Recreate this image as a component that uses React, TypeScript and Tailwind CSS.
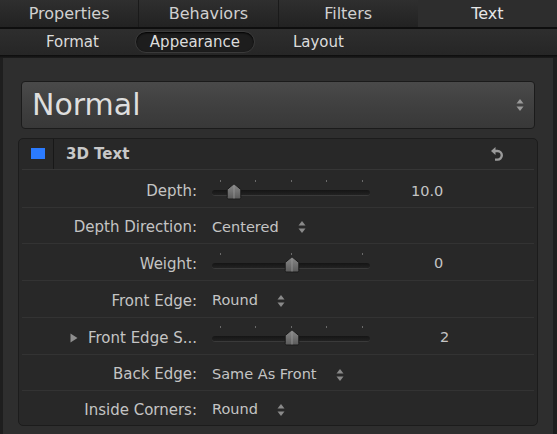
import React from 'react';

const font = { fontFamily: '"DejaVu Sans", "Liberation Sans", sans-serif' };

const UpDown: React.FC<{ className?: string }> = ({ className }) => (
    <svg width="8" height="14" viewBox="0 0 8 14" className={className}>
        <path d="M4 1 L7.5 5.5 L0.5 5.5 Z" fill="currentColor" />
        <path d="M4 13 L7.5 8.5 L0.5 8.5 Z" fill="currentColor" />
    </svg>
);

const Slider: React.FC<{ pos: number; ticks: number[] }> = ({ pos, ticks }) => (
    <div className="relative w-[158px] h-[36px] -mt-[3px]">
        {ticks.map((t) => (
            <div key={t} className="absolute top-[8px] w-px h-[2px] bg-[#6a6a6a]" style={{ left: t }} />
        ))}
        <div className="absolute left-0 right-0 top-[18px] h-[6px] rounded-full bg-gradient-to-b from-[#151515] to-[#222] border-b border-[#3a3a3a]" />
        <svg width="16" height="17" viewBox="0 0 16 17" className="absolute top-[11px]" style={{ left: pos - 8 }}>
            <defs>
                <linearGradient id={`g${pos}`} x1="0" y1="0" x2="0" y2="1">
                    <stop offset="0" stopColor="#8a8a8a" />
                    <stop offset="1" stopColor="#5a5a5a" />
                </linearGradient>
            </defs>
            <path d="M8 0.8 L14.8 6.5 L14.8 14.5 Q14.8 16 13.3 16 L2.7 16 Q1.2 16 1.2 14.5 L1.2 6.5 Z" fill={`url(#g${pos})`} stroke="#1a1a1a" strokeWidth="1" />
            <line x1="8" y1="3" x2="8" y2="15.5" stroke="#9a9a9a" strokeWidth="0.8" />
        </svg>
    </div>
);

const Row: React.FC<{ label: string; children?: React.ReactNode; disclosure?: boolean; last?: boolean; first?: boolean }> = ({ label, children, disclosure, last, first }) => (
    <div className={`flex items-center ${last ? 'h-[34px] pt-[4px]' : first ? 'h-[38px] pt-[7px] border-b border-[#333]' : 'h-[37px] pt-[4px] border-b border-[#333]'} mx-[3px]`}>
        <div className="w-[175px] flex items-center justify-end text-[15px] text-[#c4c4c4] shrink-0">
            {disclosure && (
                <svg width="8" height="10" viewBox="0 0 8 10" className="mr-[10px] text-[#8e8e8e]">
                    <path d="M0.5 0.5 L7.5 5 L0.5 9.5 Z" fill="currentColor" />
                </svg>
            )}
            <span>{label}</span>
        </div>
        <div className="flex items-center pl-[15px] flex-1">{children}</div>
    </div>
);

const PopValue: React.FC<{ text: string }> = ({ text }) => (
    <div className="flex items-center text-[14.5px] text-[#c4c4c4]">
        <span>{text}</span>
        <UpDown className="ml-[19px] text-[#8a8a8a]" />
    </div>
);

export default function App() {
    const tabs = ['Properties', 'Behaviors', 'Filters', 'Text'];
    return (
        <div className="w-[557px] h-[434px] flex flex-col bg-[#2c2c2c] overflow-hidden" style={font}>
            {/* top tabs */}
            <div className="grid grid-cols-4 h-[27px] bg-gradient-to-b from-[#2f2f2f] to-[#222]">
                {tabs.map((t, i) => (
                    <div
                        key={t}
                        className={`flex items-center justify-center pt-[1px] text-[16px] ${
                            i === 3 ? 'bg-[#2d2d2d] text-[#e6e6e6]' : 'text-[#d0d0d0] border-r border-[#1a1a1a]'
                        } ${i === 2 ? 'border-r-0' : ''}`}
                    >
                        {t}
                    </div>
                ))}
            </div>
            <div className="h-[2px] bg-[#0e0e0e]" />
            {/* sub tabs */}
            <div className="h-[26px] flex items-center bg-gradient-to-b from-[#2e2e2e] to-[#262626] text-[15px] text-[#dcdcdc]">
                <div className="w-[46px]" />
                <span>Format</span>
                <div className="ml-[36px] h-[22px] px-[14px] flex items-center rounded-full bg-[#1d1d1d] border border-[#3a3a3a] shadow-[inset_0_1px_2px_#000]">
                    Appearance
                </div>
                <span className="ml-[38px]">Layout</span>
            </div>
            <div className="h-[3px] bg-gradient-to-b from-[#0c0c0c] to-[#1d1d1d]" />
            {/* main */}
            <div className="flex-1 flex flex-col bg-[#2e2e2e] border-l-[3px] border-r-[4px] border-[#1e1e1e]">
                <div className="mt-[23px] mx-[18px] h-[48px] rounded-[4px] border border-[#1b1b1b] bg-gradient-to-b from-[#4a4a4a] via-[#404040] to-[#383838] flex items-center pl-[10px] pr-[10px]">
                    <span className="flex-1 text-[30px] text-[#dedede] leading-none">Normal</span>
                    <UpDown className="text-[#9a9a9a]" />
                </div>
                <div className="mt-[9px] mx-[15px] h-[288px] rounded-[5px] border border-[#1c1c1c] bg-[#282828] flex flex-col">
                    <div className="h-[31px] flex items-stretch border-b border-[#363636] mx-[3px]">
                        <div className="w-[32px] flex items-center justify-center border-r border-[#181818]">
                            <div className="w-[14px] h-[11px] bg-[#2b7bff]" />
                        </div>
                        <div className="flex-1 flex items-center pl-[12px] text-[15px] font-bold text-[#c8c8c8]">3D Text</div>
                        <div className="w-[60px] flex items-center justify-center pr-[14px]">
                            <svg width="14" height="16" viewBox="0 0 14 16">
                                <path d="M5.5 1 L1 5 L5.5 9 Z" fill="#9a9a9a" />
                                <path d="M5 5 H7.5 A4.3 4.3 0 0 1 7.5 13.6 H5" fill="none" stroke="#9a9a9a" strokeWidth="2.4" />
                            </svg>
                        </div>
                    </div>
                    <Row label="Depth:" first>
                        <Slider pos={22} ticks={[8, 43, 79, 114, 150]} />
                        <span className="ml-[41px] text-[14.5px] text-[#c4c4c4]">10.0</span>
                    </Row>
                    <Row label="Depth Direction:">
                        <PopValue text="Centered" />
                    </Row>
                    <Row label="Weight:">
                        <Slider pos={80} ticks={[8, 79, 150]} />
                        <span className="ml-[64px] text-[14.5px] text-[#c4c4c4]">0</span>
                    </Row>
                    <Row label="Front Edge:">
                        <PopValue text="Round" />
                    </Row>
                    <Row label="Front Edge S..." disclosure>
                        <Slider pos={80} ticks={[8, 43, 79, 114, 150]} />
                        <span className="ml-[70px] text-[14.5px] text-[#c4c4c4]">2</span>
                    </Row>
                    <Row label="Back Edge:">
                        <PopValue text="Same As Front" />
                    </Row>
                    <Row label="Inside Corners:" last>
                        <PopValue text="Round" />
                    </Row>
                </div>
            </div>
        </div>
    );
}
